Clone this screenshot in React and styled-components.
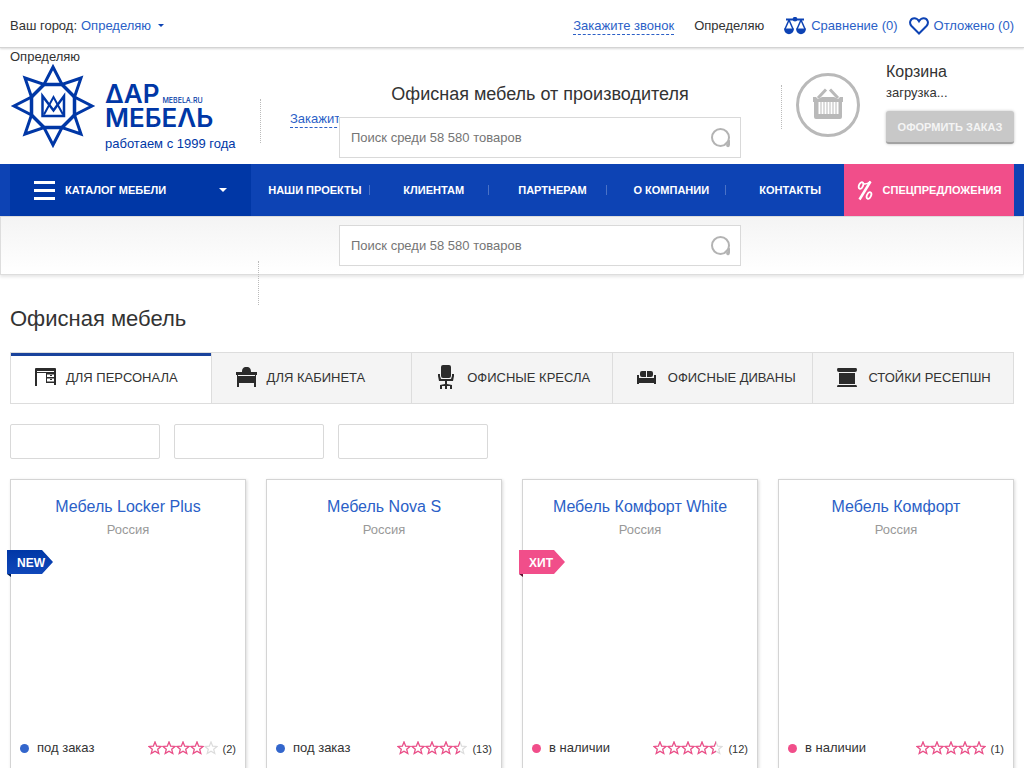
import React, { useState } from 'react';
import styled, { createGlobalStyle } from 'styled-components';

const menuItems = ['Наши проекты', 'Клиентам', 'Партнерам', 'О компании', 'Контакты'];

const tabItems = [
	{ icon: 'desk', text: 'Для персонала' },
	{ icon: 'cabinet', text: 'Для кабинета' },
	{ icon: 'chair', text: 'Офисные кресла' },
	{ icon: 'sofa', text: 'Офисные диваны' },
	{ icon: 'reception', text: 'Стойки ресепшн' },
];

const filterItems = ['Цена', 'Цвет', 'Сортировка'];

const products = [
	{ title: 'Мебель Locker Plus', country: 'Россия', label: 'new', rating: 4, votes: 2 },
	{ title: 'Мебель Nova S', country: 'Россия', rating: 4.5, votes: 13 },
	{ title: 'Мебель Комфорт White', country: 'Россия', label: 'хит', stock: true, rating: 4.5, votes: 12 },
	{ title: 'Мебель Комфорт', country: 'Россия', stock: true, rating: 5, votes: 1 },
];

const LogoIcon = () => (
	<svg width='86' height='86' viewBox='-43 -43 86 86' fill='none' stroke='#0037a6' strokeWidth='3' aria-hidden='true'>
		<path d='M0-39L9-21.500 28-28 21.500-9 39 0 21.500 9 28 28 9 21.500 0 39-9 21.500-28 28-21.500 9-39 0-21.500-9-28-28-9-21.500Z' />
		<path d='M-9-21.500H9L21.500-9V9L9 21.500H-9L-21.500 9V-9Z' strokeWidth='3.500' />
		<path d='M-10.500-10V10H11V-10L0.500 4.500Z' strokeWidth='2.500' />
		<path d='M-9 8.500L0.500-9 10 8.500' strokeWidth='2' />
	</svg>
);

const ScalesIcon = () => (
	<svg width='22' height='18' viewBox='0 0 22 18' fill='none' stroke='#0d43b4' strokeWidth='1.500' aria-hidden='true'>
		<path d='M2 2.500H9M13 2.500H20' strokeWidth='2' />
		<circle cx='11' cy='2.200' r='1.600' fill='#0d43b4' />
		<path d='M5 3L1 12M5 3L9 12M17 3L13 12M17 3L21 12' />
		<path d='M0 11.500H10C9.700 19 0.300 19 0 11.500ZM12 11.500H22C21.700 19 12.300 19 12 11.500Z' fill='#0d43b4' stroke='none' />
	</svg>
);

const HeartIcon = () => (
	<svg width='20' height='18' viewBox='0 0 20 18' fill='none' stroke='#0d43b4' strokeWidth='2' aria-hidden='true'>
		<path d='M10 16.500L2.500 9C-0.500 5.500 1.800 1.200 5.300 1.200 7.800 1.200 9.200 2.800 10 4.200 10.800 2.800 12.200 1.200 14.700 1.200 18.200 1.200 20.500 5.500 17.500 9Z' />
	</svg>
);

const SearchIcon = () => (
	<svg width='20' height='20' viewBox='0 0 20 20' fill='none' stroke='#b3b3b3' strokeWidth='2' aria-hidden='true'>
		<circle cx='9.500' cy='9.500' r='8.500' />
		<path d='M14 16L18 13.500V17' />
		<circle cx='17' cy='17.500' r='1.800' fill='#b3b3b3' stroke='none' />
	</svg>
);

const BasketIcon = () => (
	<svg width='64' height='64' viewBox='0 0 64 64' fill='none' aria-hidden='true'>
		<circle cx='32' cy='32' r='30.500' stroke='#b9b9b9' strokeWidth='3' />
		<path d='M17 24H20L22 26 26 24H38L42 26 44 24H47V29H46V44Q46 46 44 46H20Q18 46 18 44V29H17Z' fill='#b9b9b9' />
		<path d='M22 25L30 16.500M42 25L34 16.500' stroke='#b9b9b9' strokeWidth='3' />
		<path d='M23.500 29V41M26.500 29V41M29.500 29V41M32.500 29V41M35.500 29V41M38.500 29V41M41.500 29V41' stroke='#fff' strokeWidth='2' />
	</svg>
);

const PercentIcon = () => (
	<svg width='16' height='21' viewBox='0 0 16 21' fill='none' stroke='#fff' aria-hidden='true'>
		<path d='M13.500 1.500L2.500 19.500' strokeWidth='2.500' />
		<path d='M6 3.500Q9 5 13.500 1.500' strokeWidth='1.500' />
		<ellipse cx='4' cy='5.500' rx='2' ry='3.500' transform='rotate(25 4 5.500)' strokeWidth='1.800' />
		<ellipse cx='12' cy='15.500' rx='2' ry='3.500' transform='rotate(25 12 15.500)' strokeWidth='1.800' />
	</svg>
);

const tabPaths = {
	desk: (
		<>
			<path d='M1 4Q1 3 2 3H21Q22 3 22 4V9H20V8H3V21H1ZM20 9H22V20H20ZM3 6V7H20V6Z' fillRule='evenodd' />
			<path d='M12 8H20V18H12ZM13 9.500V12H20V9.500ZM13 13.500V16.500H20V13.500Z' fillRule='evenodd' />
			<path d='M16 10H18V11H16ZM16 14H18V15H16Z' />
		</>
	),
	cabinet: (
		<path
			d='M1 7H7C7 4 8 2 11.500 2S16 4 16 7H22V10H21V22H19V18H4V22H2V10H1ZM3 10V11H20V10Z'
			fillRule='evenodd'
		/>
	),
	chair: (
		<path d='M6 2Q6 0 8 0H14Q16 0 16 2V11Q16 13 14 13H8Q6 13 6 11ZM3 9H5V11L6 14H16L17 11V9H19V11L18 16H4L3 11ZM10 16H12V19L17 20V24H15V21H12V24H10V21H7V24H5V20L10 19Z' />
	),
	sofa: (
		<path d='M6 6H10V12H6Q4 12 4 10V8Q4 6 6 6ZM11 6H15Q17 6 17 8V10Q17 12 15 12H11ZM1 10H3V13H18V10H20V19H18V18H3V19H1Z' />
	),
	reception: <path d='M2 3H20Q21 3 21 5 21 7 19 7H3Q1 7 1 5 1 3 2 3ZM3 8H19V19H3ZM2 20H20Q21 20 21 22H1Q1 20 2 20Z' />,
};

const TabIcon = ({ name }) => (
	<svg width='24' height='24' viewBox='0 0 24 24' fill='#2b2b2b' aria-hidden='true'>
		{tabPaths[name]}
	</svg>
);

const starPath = 'M7 1L8.700 5.200 13 5.500 9.700 8.300 10.800 12.500 7 10.200 3.200 12.500 4.300 8.300 1 5.500 5.300 5.200Z';

const StarRow = ({ color }) => (
	<svg width='70' height='14' viewBox='0 0 70 14' fill='none' stroke={color} strokeWidth='1.200'>
		{[0, 1, 2, 3, 4].map((el) => (
			<path key={el} d={starPath} transform={`translate(${el * 14} 0)`} />
		))}
	</svg>
);

const Stars = ({ rating }) => (
	<StarBox role='img' aria-label={`${rating} из 5`}>
		<StarRow color='#dcdcdc' />
		<StarFill style={{ width: `${rating * 20}%` }}>
			<StarRow color='#ee4c88' />
		</StarFill>
	</StarBox>
);

const Search = () => {
	const [value, setValue] = useState('');

	return (
		<SearchForm role='search' onSubmit={(e) => e.preventDefault()}>
			<SearchInput
				type='text'
				aria-label='Поиск'
				placeholder='Поиск среди 58 580 товаров'
				value={value}
				onChange={(e) => setValue(e.target.value)}
			/>
			<SearchButton aria-label='Найти'>
				<SearchIcon />
			</SearchButton>
		</SearchForm>
	);
};

const App = () => {
	const [tab, setTab] = useState(0);

	return (
		<>
			<GlobalStyle />
			<TopBar>
				<City>
					Ваш город: <CityButton>Определяю</CityButton>
				</City>
				<TopLinks>
					<CallLink href='#call'>Закажите звонок</CallLink>
					<div>Определяю</div>
					<IconLinks>
						<IconLink href='#compare'>
							<ScalesIcon />
							Сравнение (0)
						</IconLink>
						<IconLink href='#later'>
							<HeartIcon />
							Отложено (0)
						</IconLink>
					</IconLinks>
				</TopLinks>
			</TopBar>

			<Header>
				<LogoCol>
					<div>Определяю</div>
					<Logo href='#home' aria-label='Дар Мебель'>
						<LogoIcon />
						<LogoText>
							<LogoLine>
								ΔАР<LogoSite>MEBELA.RU</LogoSite>
							</LogoLine>
							<LogoLine>МЕБЕΛЬ</LogoLine>
							<Slogan>работаем с 1999 года</Slogan>
						</LogoText>
					</Logo>
				</LogoCol>
				<Divider low />
				<MiddleCol>
					<Motto>Офисная мебель от производителя</Motto>
					<SearchRow>
						<CallClip>
							<CallLink href='#call'>Закажите звонок</CallLink>
						</CallClip>
						<Search />
					</SearchRow>
				</MiddleCol>
				<Divider />
				<Cart>
					<BasketIcon />
					<CartInfo>
						<CartTitle>Корзина</CartTitle>
						<div>загрузка...</div>
						<OrderButton>Оформить заказ</OrderButton>
					</CartInfo>
				</Cart>
			</Header>

			<Nav>
				<CatalogButton>
					<Burger />
					Каталог мебели
				</CatalogButton>
				<Menu>
					{menuItems.map((el) => (
						<MenuItem key={el}>
							<MenuLink href='#menu'>{el}</MenuLink>
						</MenuItem>
					))}
				</Menu>
				<SpecialLink href='#special'>
					<PercentIcon />
					Спецпредложения
				</SpecialLink>
			</Nav>

			<SubBar>
				<Search />
			</SubBar>

			<Main>
				<PageTitle>Офисная мебель</PageTitle>
				<Tabs>
					{tabItems.map((el, idx) => (
						<Tab key={el.icon} selected={tab === idx} onClick={() => setTab(idx)}>
							<TabIcon name={el.icon} />
							{el.text}
						</Tab>
					))}
				</Tabs>
				<Filters>
					{filterItems.map((el) => (
						<Filter key={el} aria-label={el} />
					))}
				</Filters>
				<Cards>
					{products.map((el) => (
						<Card key={el.title}>
							<CardTitle href='#product'>{el.title}</CardTitle>
							<Country>{el.country}</Country>
							{el.label && <Label hit={el.label === 'хит'}>{el.label}</Label>}
							<CardBottom>
								<Stock available={el.stock}>{el.stock ? 'в наличии' : 'под заказ'}</Stock>
								<Stars rating={el.rating} />
								<Votes>({el.votes})</Votes>
							</CardBottom>
						</Card>
					))}
				</Cards>
			</Main>
		</>
	);
};

export default App;

const GlobalStyle = createGlobalStyle`
	* {
		box-sizing: border-box;
	}
	body {
		margin: 0;
		background: #fff;
		color: #333;
		font-family: 'Liberation Sans', Arial, sans-serif;
		font-size: 13px;
		line-height: 16px;
	}
	a {
		color: #2b5fc7;
		text-decoration: none;
	}
	button, input {
		font-family: inherit;
		font-size: inherit;
	}
	button {
		cursor: pointer;
	}
	svg {
		display: block;
		flex: none;
	}
`;

const TopBar = styled.div`
	height: 48px;
	padding: 4px 10px 0;
	display: flex;
	justify-content: space-between;
	align-items: center;
	border-bottom: 1px solid #d4d4d4;
	box-shadow: 0 1px 2px rgba(0, 0, 0, 0.15);
`;
const City = styled.div`
	display: flex;
	gap: 4px;
`;
const CityButton = styled.button`
	padding: 0;
	border: none;
	background: none;
	color: #2b5fc7;
	line-height: 16px;
	display: flex;
	align-items: center;
	gap: 7px;
	&::after {
		content: '';
		border: 3px solid transparent;
		border-top-color: #0d43b4;
		border-bottom: none;
	}
`;
const TopLinks = styled.div`
	display: flex;
	align-items: center;
	gap: 20px;
`;
const CallLink = styled.a`
	padding-top: 1px;
	display: inline-block;
	border-bottom: 1px dashed #2b5fc7;
	white-space: nowrap;
`;
const IconLinks = styled.div`
	display: flex;
	gap: 11px;
`;
const IconLink = styled.a`
	display: flex;
	align-items: center;
	gap: 5px;
`;

const Header = styled.header`
	min-height: 116px;
	padding: 0 10px;
	display: flex;
`;
const LogoCol = styled.div`
	width: 250px;
	padding-top: 1px;
`;
const Logo = styled.a`
	margin-top: -2px;
	display: flex;
	gap: 9px;
	color: #0037a6;
`;
const LogoText = styled.div`
	padding-top: 19px;
	font-family: Inter, sans-serif;
	font-weight: 600;
`;
const LogoLine = styled.div`
	display: flex;
	align-items: baseline;
	gap: 3px;
	font-size: 26px;
	line-height: 24px;
`;
const LogoSite = styled.span`
	font-size: 7px;
	line-height: 8px;
	font-weight: 500;
`;
const Slogan = styled.div`
	margin-top: 6px;
	font-family: 'Liberation Sans', Arial, sans-serif;
	font-weight: 400;
`;
const Divider = styled.div`
	height: 44px;
	margin-top: ${(props) => (props.low ? '51px' : '37px')};
	border-left: 1px dotted #bbb;
`;
const MiddleCol = styled.div`
	flex: 1;
	padding: 35px 40px 0 29px;
`;
const Motto = styled.div`
	margin-left: 49px;
	text-align: center;
	font-size: 18px;
	line-height: 22px;
`;
const SearchRow = styled.div`
	margin-top: 12px;
	display: flex;
	align-items: center;
`;
const CallClip = styled.div`
	width: 49px;
	height: 48px;
	margin: -7px 0 0;
	overflow: hidden;
`;
const SearchForm = styled.form`
	flex: 1;
	height: 41px;
	display: flex;
	border: 1px solid #d9d9d9;
	background: #fff;
`;
const SearchInput = styled.input`
	flex: 1;
	min-width: 0;
	padding: 0 11px;
	border: none;
	outline: none;
	background: none;
	&::placeholder {
		color: #757575;
	}
`;
const SearchButton = styled.button`
	padding: 0 9px;
	border: none;
	background: none;
`;
const Cart = styled.div`
	padding: 14px 0 0 14px;
	display: flex;
	gap: 26px;
	> svg {
		margin-top: 11px;
	}
`;
const CartInfo = styled.div`
	width: 128px;
`;
const CartTitle = styled.div`
	margin-bottom: 3px;
	font-size: 16px;
	line-height: 20px;
`;
const OrderButton = styled.button`
	width: 100%;
	height: 33px;
	margin-top: 10px;
	border: none;
	border-bottom: 2px solid #a3a3a3;
	border-radius: 3px;
	background: #c8c8c8;
	box-shadow: 0 0 3px rgba(0, 0, 0, 0.25);
	color: #f4f4f4;
	font-size: 11px;
	font-weight: 700;
	text-transform: uppercase;
`;

const Nav = styled.nav`
	padding: 0 10px;
	display: flex;
	background: #0d43b4;
	color: #fff;
	font-size: 11px;
	font-weight: 700;
	text-transform: uppercase;
`;
const CatalogButton = styled.button`
	width: 241px;
	height: 52px;
	padding: 0 24px;
	display: flex;
	align-items: center;
	gap: 10px;
	border: none;
	background: #0037a6;
	color: #fff;
	font-weight: 700;
	text-transform: uppercase;
	&::after {
		content: '';
		margin-left: auto;
		border: 4px solid transparent;
		border-top-color: #fff;
		border-bottom: none;
	}
`;
const Burger = styled.span`
	width: 21px;
	height: 19px;
	border: solid #fff;
	border-width: 3px 0;
	display: flex;
	align-items: center;
	&::before {
		content: '';
		width: 100%;
		height: 3px;
		background: #fff;
	}
`;
const Menu = styled.ul`
	flex: 1;
	margin: 0;
	padding: 0;
	display: flex;
	align-items: center;
	list-style: none;
`;
const MenuItem = styled.li`
	flex: 1;
	padding-left: 10px;
	line-height: 10px;
	text-align: center;
	white-space: nowrap;
	border-right: 1px solid #4a72c7;
	&:last-child {
		border: none;
	}
`;
const MenuLink = styled.a`
	color: #fff;
`;
const SpecialLink = styled.a`
	width: 170px;
	display: flex;
	align-items: center;
	justify-content: center;
	gap: 10px;
	background: #f14e8a;
	color: #fff;
`;

const SubBar = styled.div`
	padding: 8px 282px 8px 338px;
	display: flex;
	position: relative;
	border: 1px solid #ddd;
	background: linear-gradient(#f4f4f4, #fff);
	box-shadow: 0 2px 3px rgba(0, 0, 0, 0.1);
	&::after {
		content: '';
		height: 44px;
		position: absolute;
		left: 257px;
		top: 44px;
		border-left: 1px dotted #bbb;
	}
`;

const Main = styled.main`
	padding: 31px 10px 0;
`;
const PageTitle = styled.h1`
	margin: 0 0 20px;
	font-size: 22px;
	font-weight: 400;
	line-height: 26px;
`;
const Tabs = styled.div`
	display: flex;
	border: 1px solid #ddd;
`;
const Tab = styled.button`
	flex: 1;
	height: 50px;
	padding: 0 0 2px 23px;
	display: flex;
	align-items: center;
	gap: 8px;
	border: none;
	border-right: 1px solid #ddd;
	background: #f4f4f4;
	color: #333;
	text-transform: uppercase;
	white-space: nowrap;
	${(props) =>
		props.selected && `background: #fff; box-shadow: inset 0 3px #1a439c;`}
	&:last-child {
		border-right: none;
	}
`;
const Filters = styled.div`
	margin: 20px 0;
	display: flex;
	gap: 14px;
`;
const Filter = styled.button`
	width: 150px;
	height: 35px;
	border: 1px solid #d9d9d9;
	border-radius: 2px;
	background: #fff;
`;
const Cards = styled.div`
	display: grid;
	grid-template-columns: repeat(4, 1fr);
	gap: 20px;
`;
const Card = styled.article`
	min-height: 320px;
	padding: 17px 9px 41px;
	display: flex;
	flex-direction: column;
	align-items: center;
	position: relative;
	border: 1px solid #d4d4d4;
	box-shadow: 1px 1px 3px rgba(0, 0, 0, 0.15);
`;
const CardTitle = styled.a`
	font-size: 16px;
	line-height: 20px;
`;
const Country = styled.div`
	margin-top: 5px;
	color: #999;
`;
const Label = styled.div`
	width: 46px;
	height: 27px;
	padding-left: 10px;
	position: absolute;
	left: -4px;
	top: 70px;
	color: #fff;
	font-size: 12px;
	font-weight: 700;
	line-height: 26px;
	text-transform: uppercase;
	background: ${(props) =>
		props.hit
			? 'linear-gradient(#f14e8a 24px, #5c1431 24px)'
			: 'linear-gradient(#0037a6, #1048ba 24px, #001c52 24px)'};
	clip-path: polygon(0 0, 35px 0, 100% 12px, 35px 24px, 4px 24px, 4px 100%, 0 24px);
`;
const CardBottom = styled.div`
	width: 100%;
	margin-top: auto;
	display: flex;
	align-items: center;
`;
const Stock = styled.div`
	margin-right: auto;
	display: flex;
	align-items: center;
	gap: 8px;
	&::before {
		content: '';
		width: 9px;
		height: 9px;
		border-radius: 50%;
		background: ${(props) => (props.available ? '#f14e8a' : '#3366cc')};
	}
`;
const StarBox = styled.div`
	width: 70px;
	position: relative;
`;
const StarFill = styled.div`
	position: absolute;
	left: 0;
	top: 0;
	overflow: hidden;
`;
const Votes = styled.div`
	margin-left: 5px;
	padding-top: 2px;
	font-size: 11px;
`;
